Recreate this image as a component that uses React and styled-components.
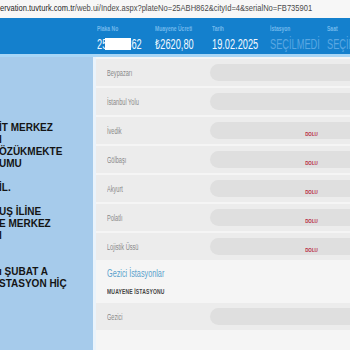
import React from "react";
import styled, { createGlobalStyle } from "styled-components";

const Global = createGlobalStyle`
  html, body { margin: 0; padding: 0; overflow: hidden; background: #f5f5f5; }
  body { font-family: "Liberation Sans", Arial, sans-serif; }
`;

const Page = styled.div`
  width: 350px;
  height: 350px;
  overflow: hidden;
  display: flex;
  flex-direction: column;
`;

const UrlBar = styled.div`
  height: 18px;
  flex-shrink: 0;
  background: #f7f7f7;
  font-family: "Liberation Sans", Arial, sans-serif;
  font-size: 8.6px;
  line-height: 17px;
  white-space: nowrap;
  color: #4a4a4a;
  overflow: hidden;
`;

const Domain = styled.span`
  color: #1e1e1e;
`;

const Header = styled.div`
  height: 36px;
  flex-shrink: 0;
  background: #1480cd;
  display: flex;
  padding-left: 97px;
  overflow: hidden;
`;

const Col = styled.div`
  width: 57.5px;
  flex-shrink: 0;
  padding-top: 7px;
  position: relative;
`;

const Cond = styled.span`
  display: inline-block;
  white-space: nowrap;
  transform: scaleX(${(p) => p.$s || 0.66});
  transform-origin: ${(p) => (p.$center ? "center" : "left")} center;
`;

const HLabel = styled.div`
  font-size: 7px;
  line-height: 8px;
  height: 8px;
  color: #72b9ec;
  font-weight: bold;
`;

const HValue = styled.div`
  margin-top: 4px;
  font-size: 14px;
  line-height: 14px;
  color: ${(p) => (p.$muted ? "#5aa7e2" : "#f2f8ff")};
  position: relative;
`;

const Redact = styled.span`
  position: absolute;
  left: 8px;
  top: 1px;
  width: 26px;
  height: 12px;
  background: #ffffff;
`;

const Strip = styled.div`
  height: 3px;
  flex-shrink: 0;
  background: #a8d6f6;
`;

const Main = styled.div`
  flex: 1;
  display: flex;
`;

const LeftPanel = styled.div`
  width: 93px;
  flex-shrink: 0;
  background: #a6cbeb;
  border-right: 3px solid #eaf3fb;
  padding-top: 65px;
  overflow: hidden;
`;

const Notice = styled.div`
  margin-left: -1px;
  font-size: 10px;
  line-height: 12px;
  font-weight: bold;
  color: #141414;
  white-space: pre;
`;

const Content = styled.div`
  width: 440px;
  flex-shrink: 0;
  background: #f5f5f5;
  padding-top: 2px;
`;

const Row = styled.div`
  height: 27px;
  margin-bottom: 2px;
  background: #ececec;
  display: flex;
  align-items: center;
  padding-left: 11px;
`;

const RowLabel = styled.div`
  width: 103px;
  flex-shrink: 0;
  font-size: 8.5px;
  color: #888888;
`;

const Pill = styled.div`
  width: 202px;
  height: 17px;
  border-radius: 9px;
  background: #dfdfdf;
  display: flex;
  align-items: center;
  justify-content: center;
`;

const Dolu = styled.span`
  font-size: 6px;
  font-weight: bold;
  color: #b8283f;
`;

const SectionTitle = styled.div`
  padding: 5px 11px 0;
  font-size: 11px;
  line-height: 13px;
  color: #5aa1cc;
`;

const SubTitle = styled.div`
  margin: 8px 11px 7px;
  font-size: 7px;
  line-height: 8px;
  font-weight: bold;
  color: #444;
  letter-spacing: 0.2px;
`;

const header = [
  { label: "Plaka No", value: "25ABH862", redact: true },
  { label: "Muayene Ücreti", value: "₺2620,80" },
  { label: "Tarih", value: "19.02.2025" },
  { label: "İstasyon", value: "SEÇİLMEDİ", muted: true },
  { label: "Saat", value: "SEÇİLMEDİ", muted: true },
];

const stations = [
  { name: "Beypazarı", full: false },
  { name: "İstanbul Yolu", full: false },
  { name: "İvedik", full: true },
  { name: "Gölbaşı", full: true },
  { name: "Akyurt", full: true },
  { name: "Polatlı", full: true },
  { name: "Lojistik Üssü", full: true },
];

const notice = [
  "İT MERKEZ",
  "I",
  "ÖZÜKMEKTE",
  "UMU",
  "",
  "İL.",
  "",
  "UŞ İLİNE",
  "E MERKEZ",
  "I",
  "",
  "",
  "ı ŞUBAT A",
  "STASYON HİÇ",
].join("\n");

function StationRow({ name, full }) {
  return (
    <Row>
      <RowLabel>
        <Cond>{name}</Cond>
      </RowLabel>
      <Pill>
        {full && (
          <Cond $s={0.75} $center>
            <Dolu>DOLU</Dolu>
          </Cond>
        )}
      </Pill>
    </Row>
  );
}

export default function App() {
  return (
    <Page>
      <Global />
      <UrlBar>
        <Cond $s={0.88}>
          <Domain>ervation.tuvturk.com.tr</Domain>
          /web.ui/Index.aspx?plateNo=25ABH862&amp;cityId=4&amp;serialNo=FB735901
        </Cond>
      </UrlBar>
      <Header>
        {header.map((h) => (
          <Col key={h.label}>
            <HLabel>
              <Cond $s={0.72}>{h.label}</Cond>
            </HLabel>
            <HValue $muted={h.muted}>
              <Cond>{h.value}</Cond>
              {h.redact && <Redact />}
            </HValue>
          </Col>
        ))}
      </Header>
      <Strip />
      <Main>
        <LeftPanel>
          <Notice>{notice}</Notice>
        </LeftPanel>
        <Content>
          {stations.map((s) => (
            <StationRow key={s.name} {...s} />
          ))}
          <SectionTitle>
            <Cond>Gezici İstasyonlar</Cond>
          </SectionTitle>
          <SubTitle>
            <Cond $s={0.72}>MUAYENE İSTASYONU</Cond>
          </SubTitle>
          <StationRow name="Gezici" full={false} />
        </Content>
      </Main>
    </Page>
  );
}
